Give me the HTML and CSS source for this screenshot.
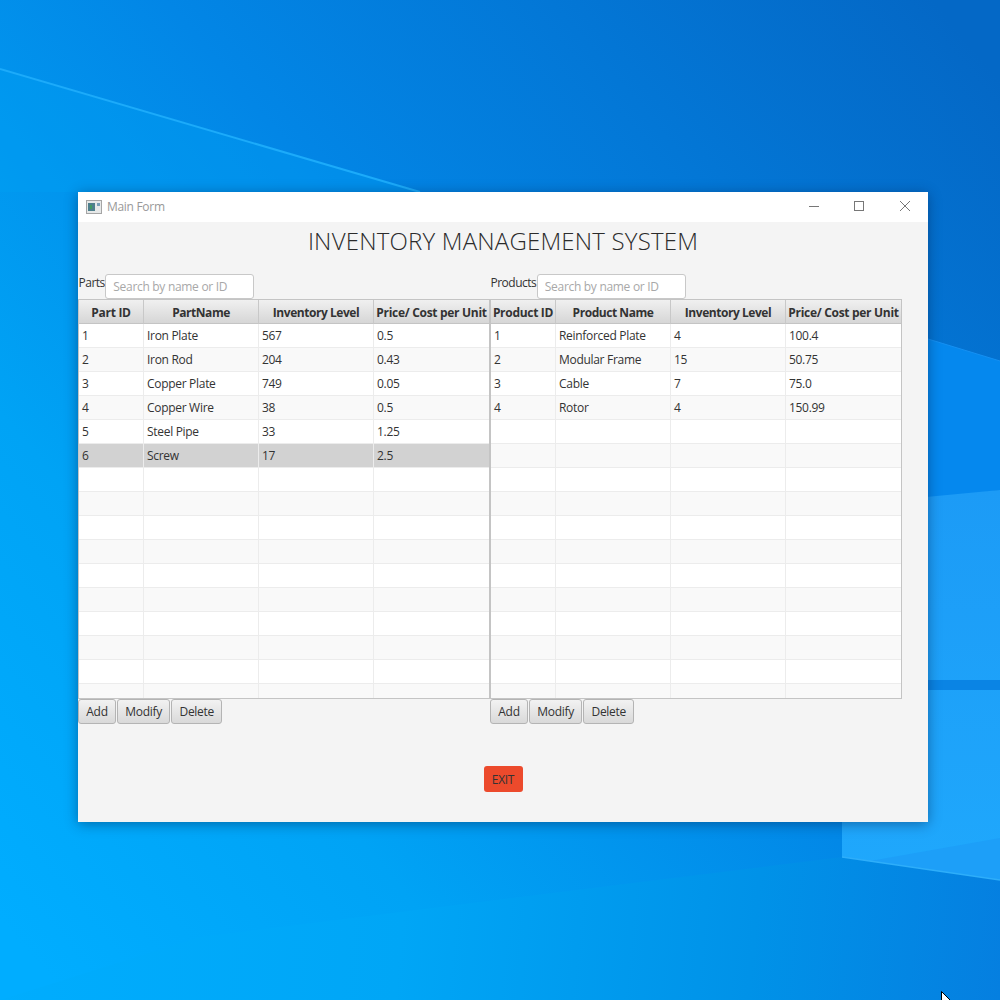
FILE: index.html
```html
<!DOCTYPE html>
<html lang="en">
<head>
<meta charset="utf-8">
<title>Main Form</title>
<link rel="stylesheet" href="styles.css">
</head>
<body>
<svg class="wallpaper" viewBox="0 0 1000 1000" aria-hidden="true">
  <defs>
    <linearGradient id="base" x1="0" y1="0.92" x2="1" y2="0.08">
      <stop offset="0" stop-color="#00adff"/>
      <stop offset="0.25" stop-color="#00a3f5"/>
      <stop offset="0.55" stop-color="#0286e6"/>
      <stop offset="1" stop-color="#0468c6"/>
    </linearGradient>
    <linearGradient id="low" gradientUnits="userSpaceOnUse" x1="0" y1="900" x2="1000" y2="1000">
      <stop offset="0" stop-color="#00adfe"/>
      <stop offset="0.4" stop-color="#00a6f6"/>
      <stop offset="0.75" stop-color="#0092e8"/>
      <stop offset="1" stop-color="#057fe0"/>
    </linearGradient>
    <linearGradient id="beam" x1="0" y1="0" x2="0" y2="1">
      <stop offset="0" stop-color="#1c9bf6"/>
      <stop offset="1" stop-color="#1fa8fc"/>
    </linearGradient>
  </defs>
  <rect width="1000" height="1000" fill="url(#base)"/>
  <polygon points="0,70 420,192 0,192" fill="#00a0f4" opacity="0.35"/>
  <line x1="0" y1="69" x2="420" y2="192" stroke="#1cabfa" stroke-width="2"/>
  <polygon points="928,339 1000,361 1000,490 928,500" fill="#0588ee"/>
  <line x1="928" y1="339" x2="1000" y2="361" stroke="#1690f2" stroke-width="1"/>
  <polygon points="842,505 1000,490 1000,880 842,857" fill="url(#beam)"/>
  <rect x="842" y="680" width="158" height="10" fill="#0a84e4"/>
  <polygon points="870,861 1000,838 1000,880" fill="#1d9ff8"/>
  <polygon points="0,1000 200,937 842,857 1000,880 1000,1000" fill="url(#low)"/>
  <line x1="842" y1="857" x2="1000" y2="880" stroke="#2eaefa" stroke-width="1.5"/>
</svg>

<main class="window">
  <header class="titlebar">
    <svg class="app-icon" viewBox="0 0 16 14" aria-hidden="true">
      <rect x="0.5" y="0.5" width="15" height="13" fill="#e6e8e8" stroke="#a5a5a5"/>
      <rect x="2" y="3" width="7" height="8" fill="#4d7f8c"/>
      <rect x="4" y="5" width="2" height="4" fill="#3f9a62"/>
      <rect x="11" y="3" width="3" height="3" fill="#7aa0b8"/>
    </svg>
    <span class="window-title">Main Form</span>
    <div class="controls">
      <svg class="control" viewBox="0 0 12 12" aria-hidden="true"><path d="M1 6.5H11"/></svg>
      <svg class="control" viewBox="0 0 12 12" aria-hidden="true"><rect x="1.5" y="1.5" width="9" height="9"/></svg>
      <svg class="control" viewBox="0 0 12 12" aria-hidden="true"><path d="M1 1L11 11M11 1L1 11"/></svg>
    </div>
  </header>

  <section class="content">
    <h1 class="heading">INVENTORY MANAGEMENT SYSTEM</h1>
    <div class="panels">
      <div class="panel">
        <div class="search-row">
          <span class="search-label">Parts</span>
          <input class="search" type="text" placeholder="Search by name or ID">
        </div>
        <div class="table-frame">
          <table class="grid">
            <thead><tr><th class="airy">Part ID</th><th>PartName</th><th>Inventory Level</th><th class="airy">Price/ Cost per Unit</th></tr></thead>
            <tbody>
              <tr><td>1</td><td>Iron Plate</td><td>567</td><td>0.5</td></tr>
              <tr><td>2</td><td>Iron Rod</td><td>204</td><td>0.43</td></tr>
              <tr><td>3</td><td>Copper Plate</td><td>749</td><td>0.05</td></tr>
              <tr><td>4</td><td>Copper Wire</td><td>38</td><td>0.5</td></tr>
              <tr><td>5</td><td>Steel Pipe</td><td>33</td><td>1.25</td></tr>
              <tr class="selected"><td>6</td><td>Screw</td><td>17</td><td>2.5</td></tr>
              <tr><td></td><td></td><td></td><td></td></tr>
              <tr><td></td><td></td><td></td><td></td></tr>
              <tr><td></td><td></td><td></td><td></td></tr>
              <tr><td></td><td></td><td></td><td></td></tr>
              <tr><td></td><td></td><td></td><td></td></tr>
              <tr><td></td><td></td><td></td><td></td></tr>
              <tr><td></td><td></td><td></td><td></td></tr>
              <tr><td></td><td></td><td></td><td></td></tr>
              <tr><td></td><td></td><td></td><td></td></tr>
              <tr><td></td><td></td><td></td><td></td></tr>
            </tbody>
          </table>
        </div>
        <div class="actions">
          <button class="btn" type="button">Add</button>
          <button class="btn" type="button">Modify</button>
          <button class="btn" type="button">Delete</button>
        </div>
      </div>

      <div class="panel">
        <div class="search-row">
          <span class="search-label">Products</span>
          <input class="search" type="text" placeholder="Search by name or ID">
        </div>
        <div class="table-frame">
          <table class="grid">
            <thead><tr><th class="airy">Product ID</th><th>Product Name</th><th>Inventory Level</th><th class="airy">Price/ Cost per Unit</th></tr></thead>
            <tbody>
              <tr><td>1</td><td>Reinforced Plate</td><td>4</td><td>100.4</td></tr>
              <tr><td>2</td><td>Modular Frame</td><td>15</td><td>50.75</td></tr>
              <tr><td>3</td><td>Cable</td><td>7</td><td>75.0</td></tr>
              <tr><td>4</td><td>Rotor</td><td>4</td><td>150.99</td></tr>
              <tr><td></td><td></td><td></td><td></td></tr>
              <tr><td></td><td></td><td></td><td></td></tr>
              <tr><td></td><td></td><td></td><td></td></tr>
              <tr><td></td><td></td><td></td><td></td></tr>
              <tr><td></td><td></td><td></td><td></td></tr>
              <tr><td></td><td></td><td></td><td></td></tr>
              <tr><td></td><td></td><td></td><td></td></tr>
              <tr><td></td><td></td><td></td><td></td></tr>
              <tr><td></td><td></td><td></td><td></td></tr>
              <tr><td></td><td></td><td></td><td></td></tr>
              <tr><td></td><td></td><td></td><td></td></tr>
              <tr><td></td><td></td><td></td><td></td></tr>
            </tbody>
          </table>
        </div>
        <div class="actions">
          <button class="btn" type="button">Add</button>
          <button class="btn" type="button">Modify</button>
          <button class="btn" type="button">Delete</button>
        </div>
      </div>
    </div>
    <div class="exit-row"><button class="exit" type="button">EXIT</button></div>
  </section>
</main>

<svg class="cursor" viewBox="0 0 12 18" aria-hidden="true"><path d="M0.5 0.5V15L4 11.7L6.2 17L8.4 16L6.2 11H11Z"/></svg>
</body>
</html>
```

FILE: styles.css
```css
* { box-sizing: border-box; }

html, body {
  margin: 0;
  height: 100%;
}

body {
  position: relative;
  width: 1000px;
  height: 1000px;
  overflow: hidden;
  background: #0288e6;
  font-family: "Open Sans", "Noto Sans", "Liberation Sans", sans-serif;
  font-size: 12px;
  letter-spacing: -0.3px;
  color: #333;
}

.wallpaper {
  position: absolute;
  left: 0;
  top: 0;
  width: 1000px;
  height: 1000px;
}

.cursor {
  position: absolute;
  left: 941px;
  top: 991px;
  width: 12px;
  height: 18px;
}

.cursor path {
  fill: #fff;
  stroke: #000;
  stroke-width: 1;
}

.window {
  position: absolute;
  left: 78px;
  top: 192px;
  width: 850px;
  height: 630px;
  display: flex;
  flex-direction: column;
  background: #f4f4f4;
  box-shadow: 0 2px 12px rgba(0, 30, 70, 0.45);
}

.titlebar {
  flex: none;
  height: 30px;
  display: flex;
  align-items: center;
  padding-left: 8px;
  background: #fff;
}

.app-icon {
  width: 16px;
  height: 14px;
  margin-right: 5px;
}

.window-title {
  color: #999;
  padding-bottom: 1px;
}

.controls {
  margin-left: auto;
  display: flex;
  gap: 33px;
  padding-right: 17px;
  padding-bottom: 2px;
}

.control {
  width: 12px;
  height: 12px;
}

.control:last-child {
  margin-left: 1px;
}

.control path,
.control rect {
  fill: none;
  stroke: #777;
  stroke-width: 1;
}

.content {
  flex: 1;
  display: flex;
  flex-direction: column;
}

.heading {
  margin: 0;
  height: 52px;
  padding-top: 2px;
  text-align: center;
  font-size: 24px;
  font-weight: 300;
  line-height: 34px;
  letter-spacing: 0.2px;
  color: #2b2b2b;
}

.panels {
  display: grid;
  grid-template-columns: 412px 412px;
}

.search-row {
  height: 25px;
  display: flex;
  align-items: flex-start;
}

.search-label {
  padding-left: 0.5px;
  padding-top: 1px;
  margin-right: 0.5px;
  line-height: 16px;
  letter-spacing: -0.5px;
  color: #333;
}

.search {
  width: 149px;
  height: 25px;
  padding: 0 7px;
  border: 1px solid #c8c8c8;
  border-radius: 3px;
  background: #fff;
  font: inherit;
  letter-spacing: inherit;
  outline: none;
}

.search::placeholder {
  color: #a8a8a8;
  opacity: 1;
}

.table-frame {
  height: 400px;
  overflow: hidden;
  border: 1px solid #c4c4c4;
  background: #fff;
}

.grid {
  width: 410px;
  table-layout: fixed;
  border-collapse: separate;
  border-spacing: 0;
}

.grid th,
.grid td {
  padding: 0 3px;
  white-space: nowrap;
  overflow: hidden;
  border-right: 1px solid #ececec;
}

.grid th:first-child,
.grid td:first-child {
  width: 65px;
}

.grid th {
  height: 24px;
  padding: 1px 0 0;
  text-align: center;
  font-weight: 700;
  letter-spacing: -0.45px;
  color: #333;
  background: linear-gradient(#f0f0f0, #d6d6d6);
  border-right: 1px solid #c8c8c8;
  border-bottom: 1px solid #c4c4c4;
}

.grid th.airy {
  letter-spacing: -0.3px;
}

.grid td {
  height: 24px;
  border-bottom: 1px solid #ececec;
  background: #fff;
}

.grid tbody tr:nth-child(even) td {
  background: #f9f9f9;
}

.grid th:last-child,
.grid td:last-child {
  border-right: none;
}

.grid tbody tr.selected td {
  background: #d2d2d2;
}

.actions {
  display: flex;
  gap: 1px;
  height: 25px;
}

.btn {
  height: 25px;
  padding: 0 7.3px;
  border: 1px solid #b4b4b4;
  border-radius: 3px;
  background: linear-gradient(#f2f2f2, #d9d9d9);
  font: inherit;
  letter-spacing: inherit;
  color: #333;
}

.exit-row {
  margin-top: 42px;
  display: flex;
  justify-content: center;
}

.exit {
  width: 39px;
  height: 26px;
  padding: 0;
  border: none;
  border-radius: 3px;
  background: #ec4a2c;
  font: inherit;
  letter-spacing: inherit;
  color: #333;
}
```
